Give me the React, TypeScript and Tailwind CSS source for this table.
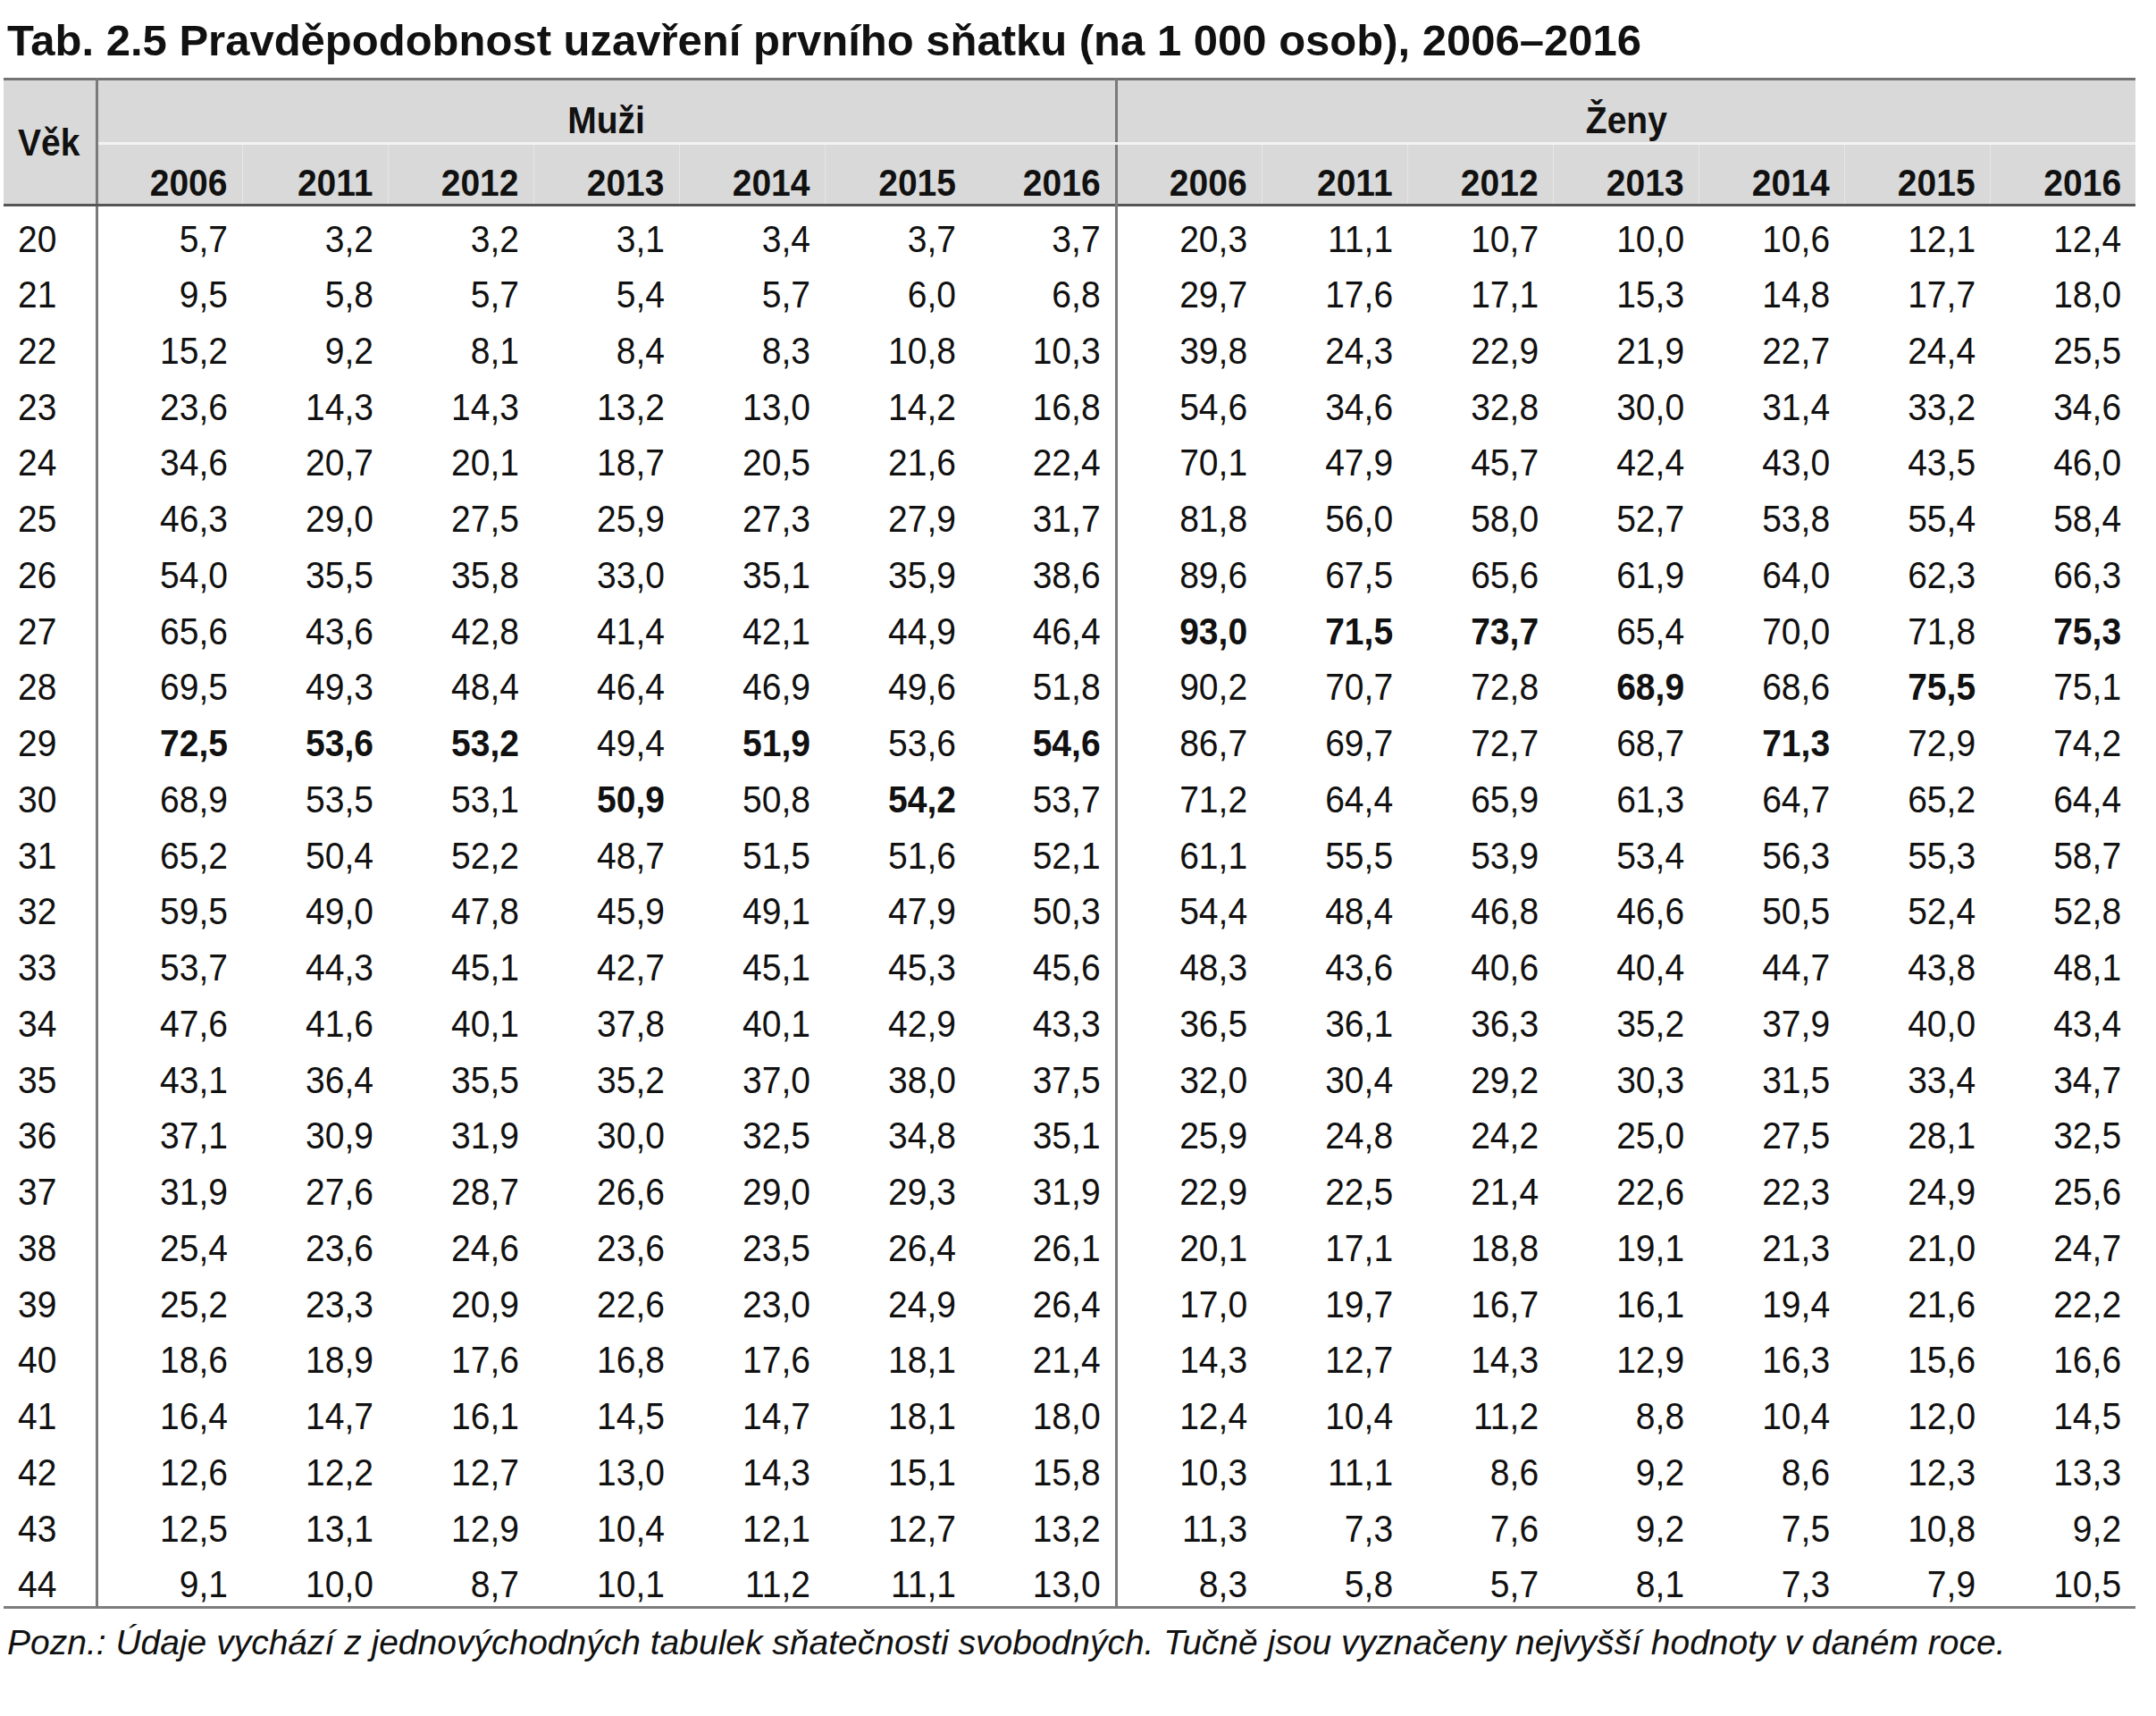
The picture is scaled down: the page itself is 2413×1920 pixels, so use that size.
import React from 'react';

type Cell = string;

const years = ['2006', '2011', '2012', '2013', '2014', '2015', '2016'];

// age, 7 values for muži, 7 for ženy; '*' prefix marks the yearly maximum (bold)
const rows: [string, Cell[]][] = [
  ['20', ['5,7', '3,2', '3,2', '3,1', '3,4', '3,7', '3,7', '20,3', '11,1', '10,7', '10,0', '10,6', '12,1', '12,4']],
  ['21', ['9,5', '5,8', '5,7', '5,4', '5,7', '6,0', '6,8', '29,7', '17,6', '17,1', '15,3', '14,8', '17,7', '18,0']],
  ['22', ['15,2', '9,2', '8,1', '8,4', '8,3', '10,8', '10,3', '39,8', '24,3', '22,9', '21,9', '22,7', '24,4', '25,5']],
  ['23', ['23,6', '14,3', '14,3', '13,2', '13,0', '14,2', '16,8', '54,6', '34,6', '32,8', '30,0', '31,4', '33,2', '34,6']],
  ['24', ['34,6', '20,7', '20,1', '18,7', '20,5', '21,6', '22,4', '70,1', '47,9', '45,7', '42,4', '43,0', '43,5', '46,0']],
  ['25', ['46,3', '29,0', '27,5', '25,9', '27,3', '27,9', '31,7', '81,8', '56,0', '58,0', '52,7', '53,8', '55,4', '58,4']],
  ['26', ['54,0', '35,5', '35,8', '33,0', '35,1', '35,9', '38,6', '89,6', '67,5', '65,6', '61,9', '64,0', '62,3', '66,3']],
  ['27', ['65,6', '43,6', '42,8', '41,4', '42,1', '44,9', '46,4', '*93,0', '*71,5', '*73,7', '65,4', '70,0', '71,8', '*75,3']],
  ['28', ['69,5', '49,3', '48,4', '46,4', '46,9', '49,6', '51,8', '90,2', '70,7', '72,8', '*68,9', '68,6', '*75,5', '75,1']],
  ['29', ['*72,5', '*53,6', '*53,2', '49,4', '*51,9', '53,6', '*54,6', '86,7', '69,7', '72,7', '68,7', '*71,3', '72,9', '74,2']],
  ['30', ['68,9', '53,5', '53,1', '*50,9', '50,8', '*54,2', '53,7', '71,2', '64,4', '65,9', '61,3', '64,7', '65,2', '64,4']],
  ['31', ['65,2', '50,4', '52,2', '48,7', '51,5', '51,6', '52,1', '61,1', '55,5', '53,9', '53,4', '56,3', '55,3', '58,7']],
  ['32', ['59,5', '49,0', '47,8', '45,9', '49,1', '47,9', '50,3', '54,4', '48,4', '46,8', '46,6', '50,5', '52,4', '52,8']],
  ['33', ['53,7', '44,3', '45,1', '42,7', '45,1', '45,3', '45,6', '48,3', '43,6', '40,6', '40,4', '44,7', '43,8', '48,1']],
  ['34', ['47,6', '41,6', '40,1', '37,8', '40,1', '42,9', '43,3', '36,5', '36,1', '36,3', '35,2', '37,9', '40,0', '43,4']],
  ['35', ['43,1', '36,4', '35,5', '35,2', '37,0', '38,0', '37,5', '32,0', '30,4', '29,2', '30,3', '31,5', '33,4', '34,7']],
  ['36', ['37,1', '30,9', '31,9', '30,0', '32,5', '34,8', '35,1', '25,9', '24,8', '24,2', '25,0', '27,5', '28,1', '32,5']],
  ['37', ['31,9', '27,6', '28,7', '26,6', '29,0', '29,3', '31,9', '22,9', '22,5', '21,4', '22,6', '22,3', '24,9', '25,6']],
  ['38', ['25,4', '23,6', '24,6', '23,6', '23,5', '26,4', '26,1', '20,1', '17,1', '18,8', '19,1', '21,3', '21,0', '24,7']],
  ['39', ['25,2', '23,3', '20,9', '22,6', '23,0', '24,9', '26,4', '17,0', '19,7', '16,7', '16,1', '19,4', '21,6', '22,2']],
  ['40', ['18,6', '18,9', '17,6', '16,8', '17,6', '18,1', '21,4', '14,3', '12,7', '14,3', '12,9', '16,3', '15,6', '16,6']],
  ['41', ['16,4', '14,7', '16,1', '14,5', '14,7', '18,1', '18,0', '12,4', '10,4', '11,2', '8,8', '10,4', '12,0', '14,5']],
  ['42', ['12,6', '12,2', '12,7', '13,0', '14,3', '15,1', '15,8', '10,3', '11,1', '8,6', '9,2', '8,6', '12,3', '13,3']],
  ['43', ['12,5', '13,1', '12,9', '10,4', '12,1', '12,7', '13,2', '11,3', '7,3', '7,6', '9,2', '7,5', '10,8', '9,2']],
  ['44', ['9,1', '10,0', '8,7', '10,1', '11,2', '11,1', '13,0', '8,3', '5,8', '5,7', '8,1', '7,3', '7,9', '10,5']],
];

const App: React.FC = () => {
  return (
    <div className="w-[2413px] min-h-[1920px] bg-white pl-[4px] font-['Liberation_Sans',Arial,sans-serif] text-[#111]">
      <h1 className="pt-[17px] pl-[4px] text-[49px] leading-[56px] font-bold">
        Tab. 2.5 Pravděpodobnost uzavření prvního sňatku (na 1 000 osob), 2006–2016
      </h1>

      <table className="mt-[14px] w-[2386px] table-fixed border-collapse text-[39px] leading-none">
        <colgroup>
          <col className="w-[104px]" />
          {Array.from({ length: 14 }).map((_, i) => (
            <col key={i} className="w-[163px]" />
          ))}
        </colgroup>
        <thead>
          <tr className="h-[72px] bg-[#d9d9d9] border-t-[3px] border-[#747474]">
            <th rowSpan={2} className="border-r-[3px] border-b-[3px] border-r-[#7a7a7a] border-b-[#555] pl-[16px] text-left align-middle font-bold">
              <span className="inline-block scale-y-[1.08]">Věk</span>
            </th>
            <th colSpan={7} className="border-r-[3px] border-r-[#7a7a7a] border-b-[3px] border-b-[#f2f2f2] pt-[20px] text-center font-bold">
              <span className="inline-block scale-y-[1.08]">Muži</span>
            </th>
            <th colSpan={7} className="border-b-[3px] border-b-[#f2f2f2] pt-[20px] text-center font-bold">
              <span className="inline-block scale-y-[1.08]">Ženy</span>
            </th>
          </tr>
          <tr className="h-[69px] bg-[#d9d9d9] border-b-[3px] border-[#555]">
            {[...years, ...years].map((y, i) => (
              <th
                key={i}
                className={`pr-[16px] pt-[18px] text-right font-bold ${
                  i === 6 ? 'border-r-[3px] border-r-[#7a7a7a]' : i === 0 || i === 7 ? '' : 'border-l border-l-[#e6e6e6]'
                }`}
              >
                <span className="inline-block scale-y-[1.08]">{y}</span>
              </th>
            ))}
          </tr>
        </thead>
        <tbody className="border-b-[3px] border-[#7d7d7d]">
          {rows.map(([age, vals]) => (
            <tr key={age} className="h-[62.75px]">
              <td className="border-r-[3px] border-r-[#7a7a7a] pl-[16px] pt-[12px] text-left">
                <span className="inline-block scale-y-[1.08]">{age}</span>
              </td>
              {vals.map((v, i) => {
                const bold = v.startsWith('*');
                return (
                  <td
                    key={i}
                    className={`pr-[16px] pt-[12px] text-right ${bold ? 'font-bold' : ''} ${
                      i === 6 ? 'border-r-[3px] border-r-[#7a7a7a]' : ''
                    }`}
                  >
                    <span className="inline-block scale-y-[1.08]">{bold ? v.slice(1) : v}</span>
                  </td>
                );
              })}
            </tr>
          ))}
        </tbody>
      </table>

      <p className="mt-[15px] pl-[4px] text-[39px] leading-[45px] italic">
        Pozn.: Údaje vychází z jednovýchodných tabulek sňatečnosti svobodných. Tučně jsou vyznačeny nejvyšší hodnoty v daném roce.
      </p>
    </div>
  );
};

export default App;
